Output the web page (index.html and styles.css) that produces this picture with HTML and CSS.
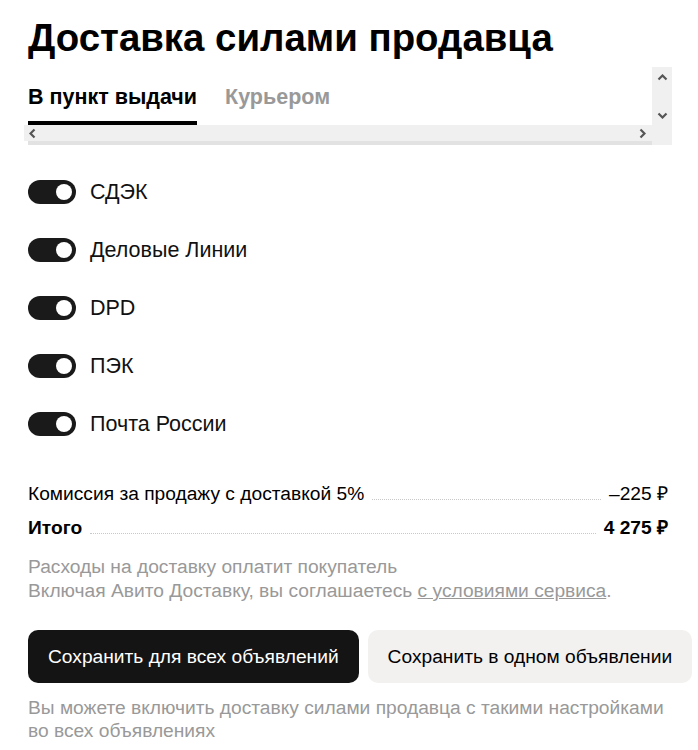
FILE: index.html
```html
<!DOCTYPE html>
<html lang="ru">
<head>
  <meta charset="UTF-8" />
  <meta name="viewport" content="width=device-width, initial-scale=1.0" />
  <title>Доставка силами продавца</title>
  <link rel="stylesheet" href="styles.css">
</head>
<body>
  <div class="page">
    <h1>Доставка силами продавца</h1>

    <div class="tabs-box">
      <div class="tabs">
        <div class="tab active">В пункт выдачи</div>
        <div class="tab">Курьером</div>
      </div>
      <div class="vbar">
        <svg width="11" height="7" viewBox="0 0 11 7"><path d="M1.5 5.5 L5.5 1.5 L9.5 5.5" fill="none" stroke="#555" stroke-width="2.2"/></svg>
        <svg width="11" height="7" viewBox="0 0 11 7"><path d="M1.5 1.5 L5.5 5.5 L9.5 1.5" fill="none" stroke="#555" stroke-width="2.2"/></svg>
      </div>
      <div class="hbar">
        <svg width="7" height="11" viewBox="0 0 7 11"><path d="M5.5 1.5 L1.5 5.5 L5.5 9.5" fill="none" stroke="#555" stroke-width="2.2"/></svg>
        <svg width="7" height="11" viewBox="0 0 7 11"><path d="M1.5 1.5 L5.5 5.5 L1.5 9.5" fill="none" stroke="#555" stroke-width="2.2"/></svg>
      </div>
      <div class="tabs-line"></div>
    </div>

    <div class="services">
      <label class="service"><span class="toggle on"></span>СДЭК</label>
      <label class="service"><span class="toggle on"></span>Деловые Линии</label>
      <label class="service"><span class="toggle on"></span>DPD</label>
      <label class="service"><span class="toggle on"></span>ПЭК</label>
      <label class="service"><span class="toggle on"></span>Почта России</label>
    </div>

    <div class="summary">
      <div class="row">
        <span>Комиссия за продажу с доставкой 5%</span>
        <span class="dots"></span>
        <span>–225 ₽</span>
      </div>
      <div class="row total">
        <span>Итого</span>
        <span class="dots"></span>
        <span>4 275 ₽</span>
      </div>
    </div>

    <p class="note">
      Расходы на доставку оплатит покупатель<br>
      Включая Авито Доставку, вы соглашаетесь <a href="#">с условиями сервиса</a>.
    </p>

    <div class="buttons">
      <button class="btn primary">Сохранить для всех объявлений</button>
      <button class="btn secondary">Сохранить в одном объявлении</button>
    </div>

    <p class="hint">Вы можете включить доставку силами продавца с такими настройками во всех объявлениях</p>
  </div>
</body>
</html>
```

FILE: styles.css
```css
body {
  margin: 0;
  font-family: "Liberation Sans", Arial, sans-serif;
  background: #fff;
  color: #000;
}
.page {
  padding: 16px 30px 0 28px;
}
h1 {
  margin: 0;
  font-size: 38.4px;
  line-height: 44px;
  font-weight: bold;
}

/* tabs with scrollbars */
.tabs-box {
  margin: 7px -4px 0 -4px;
  display: grid;
  grid-template-columns: 1fr 20px;
  grid-template-rows: 58px 16px 4px;
}
.tabs {
  grid-column: 1;
  grid-row: 1;
  display: flex;
  gap: 28px;
  padding-left: 4px;
}
.tab {
  padding: 18px 0 12px;
  font-size: 21.5px;
  line-height: 24px;
  font-weight: bold;
  color: #999;
  border-bottom: 4px solid transparent;
  white-space: nowrap;
}
.tab.active {
  color: #000;
  border-bottom-color: #000;
}
.vbar {
  grid-column: 2;
  grid-row: 1 / 4;
  background: #f0f0f0;
  display: flex;
  flex-direction: column;
  align-items: center;
  padding-top: 7px;
  gap: 31px;
}
.hbar {
  grid-column: 1;
  grid-row: 2;
  background: #f0f0f0;
  display: flex;
  align-items: center;
  justify-content: space-between;
  padding: 0 6px 0 5px;
}
.tabs-line {
  grid-column: 1;
  grid-row: 3;
  margin-left: 4px;
  background: #e2e2e2;
}

/* services */
.services {
  margin-top: 35px;
  display: flex;
  flex-direction: column;
  gap: 34px;
}
.service {
  display: flex;
  align-items: center;
  gap: 14px;
  font-size: 21.5px;
  line-height: 24px;
  color: #111;
}
.toggle {
  position: relative;
  width: 48px;
  height: 24px;
  border-radius: 12px;
  background: #c4c4c4;
  flex-shrink: 0;
}
.toggle.on {
  background: #1a1a1a;
}
.toggle::after {
  content: "";
  position: absolute;
  top: 4px;
  left: 4px;
  width: 16px;
  height: 16px;
  border-radius: 50%;
  background: #fff;
}
.toggle.on::after {
  left: 28px;
}

/* summary */
.summary {
  margin-top: 46px;
  display: flex;
  flex-direction: column;
  gap: 10px;
}
.row {
  display: flex;
  align-items: baseline;
  font-size: 19.2px;
  line-height: 24px;
}
.row .dots {
  flex: 1;
  margin: 0 8px;
  border-bottom: 1px dotted #c8c8c8;
}
.row.total {
  font-weight: bold;
}
.note {
  margin: 15px 0 0;
  font-size: 19.2px;
  line-height: 24px;
  color: #999;
}
.note a {
  color: #999;
}
.buttons {
  margin-top: 27px;
  display: flex;
  gap: 9px;
}
.btn {
  flex-shrink: 0;
  height: 53px;
  padding: 0 20px;
  border: none;
  border-radius: 10px;
  font-family: inherit;
  font-size: 19.2px;
  white-space: nowrap;
  cursor: pointer;
}
.btn.primary {
  background: #141414;
  color: #fff;
}
.btn.secondary {
  background: #f2f1f0;
  color: #000;
}
.hint {
  margin: 13px 0 0;
  font-size: 19.2px;
  line-height: 23px;
  color: #999;
}
```
